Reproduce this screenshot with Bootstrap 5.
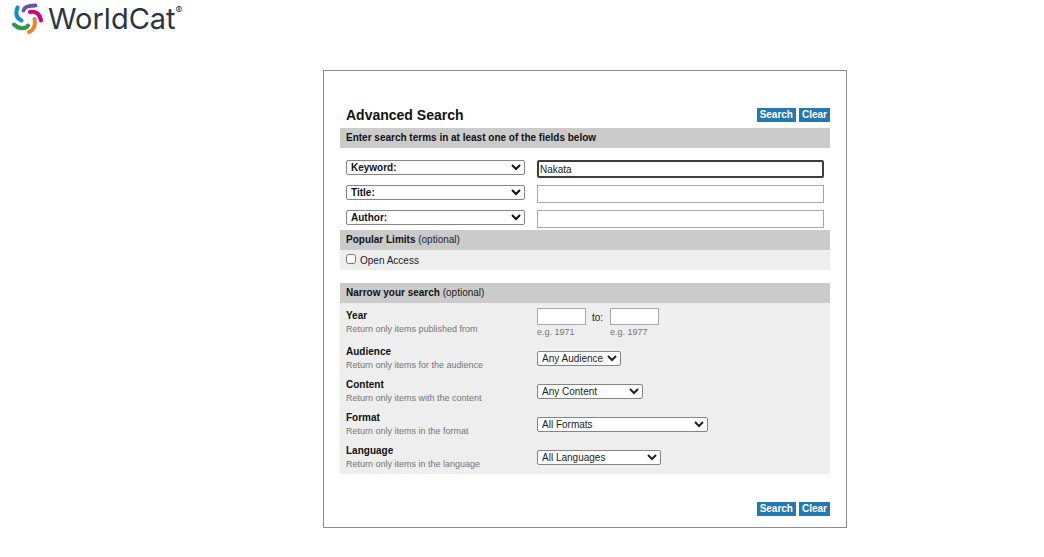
<!DOCTYPE html>
<html lang="en">
<head>
<meta charset="utf-8">
<meta name="viewport" content="width=device-width, initial-scale=1">
<title>WorldCat Advanced Search</title>
<link href="https://cdn.jsdelivr.net/npm/bootstrap@5.3.0/dist/css/bootstrap.min.css" rel="stylesheet">
<style>
body{font-family:"Liberation Sans",Arial,sans-serif;font-size:10px;line-height:13px;color:#222;background:#fff}
.site-head{padding:2px 8px 34px 12px}
.brand{color:#2b3540;font-family:Inter,sans-serif;font-size:29px;line-height:34px;gap:5px}
.brand sup{font-size:10px;top:-15px;line-height:0}
.page-grid{display:grid;grid-template-columns:minmax(0,323px) minmax(0,524px)}
.search-panel{grid-column:2;border:1px solid #8d8b90;padding:35px 16px 11px 16px}
.head-row{padding-left:6px}
.panel-title{font-size:14px;line-height:18px;color:#111}
.btn-row{gap:3px}
.btn-wc{--bs-btn-padding-x:3px;--bs-btn-padding-y:0;--bs-btn-font-size:10px;--bs-btn-line-height:14px;--bs-btn-font-weight:700;--bs-btn-border-width:0;--bs-btn-border-radius:0;--bs-btn-bg:#2478b3;--bs-btn-color:#fff;--bs-btn-hover-bg:#1b5f91;--bs-btn-hover-color:#fff;--bs-btn-active-bg:#1b5f91;--bs-btn-active-color:#fff}
.bar{background:#cbcbcb;padding:3px 6px 4px;line-height:13px;font-size:10px;margin:0;font-weight:400;color:#222}
.bar b{color:#111}
.shade{background:#eee}
.terms{padding-top:12px;height:82px}
.pair{display:grid;grid-template-columns:191px minmax(0,1fr);padding:0 6px}
.pair select,.pair input{font-size:10px;color:#222;background:#fff}
.pair select{height:15px;border:1px solid #858585;border-radius:2px;padding:0;line-height:13px}
.pair input{height:18px;border:1px solid #aaa7ae;padding:0 2px}
.term select{width:179px;font-weight:700;color:#111}
.term input{width:100%}
.term input.current{border:2px solid #3d3b44;border-radius:2px;padding:0 1px;outline:0}
.term{height:25px}
.limit-check{width:10px;height:10px;margin:0}
.limit-row{padding:4px 6px 3px;height:20px;gap:4px}
.narrow-bar{margin-top:13px}
.narrow-list{padding-top:5px}
.hint{font-size:9px;line-height:12px;color:#757575}
.field-name{font-weight:700;line-height:15px;color:#111;vertical-align:top}
.narrow{height:33px}
.narrow.year-row{height:36px}
.narrow:last-child{height:31px}
.choice{padding-top:7px}
.pair .year-box input{width:49px;height:17px;display:block}
.year-to{width:24px;padding:3px 0 0 6px}
.w-aud{width:84px}.w-con{width:106px}.w-fmt{width:171px}.w-lang{width:124px}
.foot-row{padding-top:28px}
</style>
</head>
<body>
<header class="site-head d-flex">
<a href="#" class="brand d-inline-flex align-items-center text-decoration-none">
<svg width="31" height="32" viewBox="0 0 31 32" fill="none" stroke-width="4" stroke-linecap="round" aria-hidden="true">
<path d="M11.500 7.500C12 4 16 2.500 23.500 2.500" stroke="#6b51a1"/>
<path d="M18 9C24 8 28 11 29 17.500" stroke="#d3007f"/>
<path d="M22.500 16C24 21 22 27 17 29" stroke="#f58220"/>
<path d="M16 22.500C14 26 7 26.500 2 21.500" stroke="#2e9a47"/>
<path d="M9.500 17.500C4 15 3.500 10 5.500 4.500" stroke="#0a8ecf"/>
</svg>
<span>WorldCat<sup>®</sup></span></a>
</header>
<main class="page-grid">
<form class="search-panel" onsubmit="return false">
<div class="d-flex justify-content-between align-items-center head-row">
<h1 class="panel-title fw-bold m-0">Advanced Search</h1>
<div class="d-flex btn-row"><button type="submit" class="btn btn-wc">Search</button><button type="reset" class="btn btn-wc">Clear</button></div>
</div>
<h2 class="bar mt-1"><b>Enter search terms in at least one of the fields below</b></h2>
<div class="terms">
<div class="pair term align-items-start"><select aria-label="First search field"><option>Keyword:</option></select><input type="text" class="current" aria-label="Keyword terms" value="Nakata"></div>
<div class="pair term align-items-start"><select aria-label="Second search field"><option>Title:</option></select><input type="text" aria-label="Title terms"></div>
<div class="pair term align-items-start"><select aria-label="Third search field"><option>Author:</option></select><input type="text" aria-label="Author terms"></div>
</div>
<h2 class="bar"><b>Popular Limits</b> (optional)</h2>
<div class="shade limit-row d-flex"><input type="checkbox" id="oa" class="limit-check"><label for="oa">Open Access</label></div>
<h2 class="bar narrow-bar"><b>Narrow your search</b> (optional)</h2>
<div class="shade narrow-list">
<div class="pair narrow year-row"><div><label for="from" class="field-name">Year</label><div class="hint">Return only items published from</div></div>
<div class="d-flex"><div class="year-box"><input type="text" id="from"><span class="hint">e.g. 1971</span></div><label for="to" class="year-to">to:</label><div class="year-box"><input type="text" id="to"><span class="hint">e.g. 1977</span></div></div></div>
<div class="pair narrow"><div><label for="aud" class="field-name">Audience</label><div class="hint">Return only items for the audience</div></div><div class="choice"><select id="aud" class="w-aud"><option>Any Audience</option></select></div></div>
<div class="pair narrow"><div><label for="con" class="field-name">Content</label><div class="hint">Return only items with the content</div></div><div class="choice"><select id="con" class="w-con"><option>Any Content</option></select></div></div>
<div class="pair narrow"><div><label for="fmt" class="field-name">Format</label><div class="hint">Return only items in the format</div></div><div class="choice"><select id="fmt" class="w-fmt"><option>All Formats</option></select></div></div>
<div class="pair narrow"><div><label for="lang" class="field-name">Language</label><div class="hint">Return only items in the language</div></div><div class="choice"><select id="lang" class="w-lang"><option>All Languages</option></select></div></div>
</div>
<div class="d-flex justify-content-end btn-row foot-row"><button type="submit" class="btn btn-wc">Search</button><button type="reset" class="btn btn-wc">Clear</button></div>
</form>
</main>
<script src="https://cdn.jsdelivr.net/npm/bootstrap@5.3.0/dist/js/bootstrap.bundle.min.js"></script>
</body>
</html>
